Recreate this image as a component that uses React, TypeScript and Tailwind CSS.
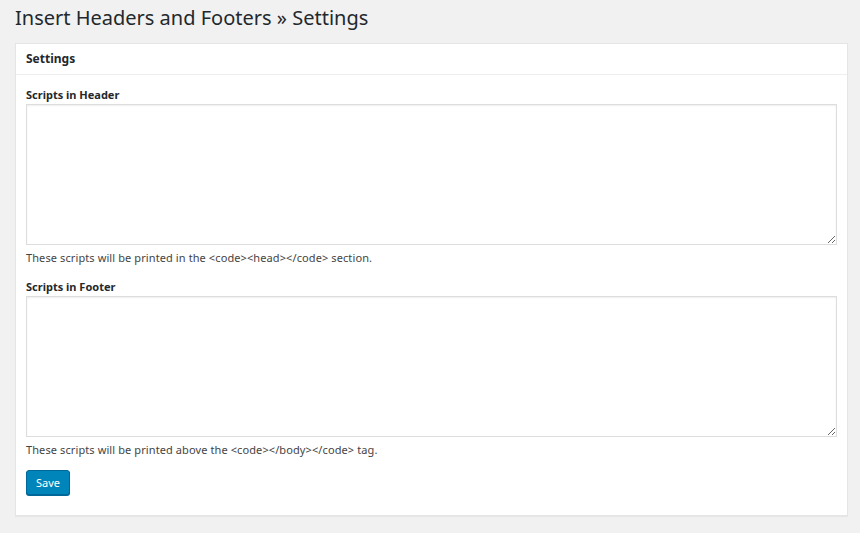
export default function App() {
  return (
    <div className="min-h-[533px] bg-[#f1f1f1] pl-[15px] pr-[12px] pt-[6px] pb-4 text-[#23282d] [font-family:'Noto_Sans','Open_Sans',sans-serif]">
      <h1 className="text-[20px] font-normal leading-[24px]">Insert Headers and Footers » Settings</h1>
      <div className="mt-[13px] border border-[#e5e5e5] bg-white shadow-[0_1px_1px_rgba(0,0,0,0.04)]">
        <div className="border-b border-[#eeeeee] px-[10px] py-[7px]">
          <h2 className="text-[12px] font-bold leading-[16px]">Settings</h2>
        </div>
        <div className="px-[10px] pt-[13px] pb-[20px] text-[11px] text-[#444]">
          <label className="block font-bold leading-[14px] text-[#23282d]">Scripts in Header</label>
          <textarea className="mt-[2px] block h-[141px] w-full resize-y border border-[#ddd] shadow-[inset_0_1px_2px_rgba(0,0,0,0.07)] outline-none" />
          <p className="mt-[5px] leading-[16px] tracking-[0.1px]">These scripts will be printed in the &lt;code&gt;&lt;head&gt;&lt;/code&gt; section.</p>
          <label className="mt-[14px] block font-bold leading-[14px] text-[#23282d]">Scripts in Footer</label>
          <textarea className="mt-[2px] block h-[141px] w-full resize-y border border-[#ddd] shadow-[inset_0_1px_2px_rgba(0,0,0,0.07)] outline-none" />
          <p className="mt-[5px] leading-[16px] tracking-[0.1px]">These scripts will be printed above the &lt;code&gt;&lt;/body&gt;&lt;/code&gt; tag.</p>
          <button className="mt-[12px] h-[25px] rounded-[3px] border border-[#006799] bg-[#0085ba] px-[9px] text-[11px] leading-[23px] text-white shadow-[0_1px_0_#006799]">Save</button>
        </div>
      </div>
    </div>
  );
}
